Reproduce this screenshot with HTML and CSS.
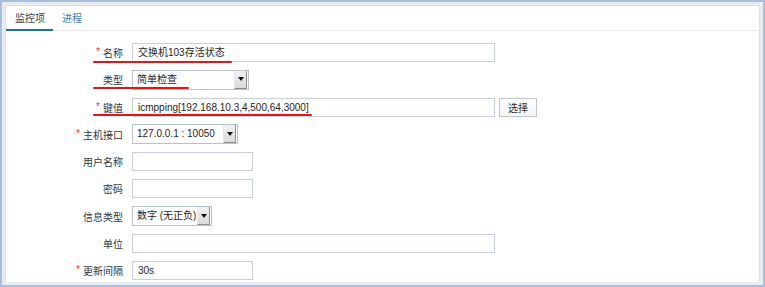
FILE: index.html
```html
<!DOCTYPE html>
<html lang="zh">
<head>
<meta charset="utf-8">
<link rel="stylesheet" href="styles.css">
</head>
<body>
<div class="frame">
  <div class="panel">
    <div class="tabs">
      <div class="tab active">监控项</div>
      <div class="tab link">进程</div>
    </div>
    <div class="form">
      <label class="lbl"><span class="req">*</span>名称</label>
      <div class="field"><div class="input w-wide">交换机103存活状态</div></div>

      <label class="lbl">类型</label>
      <div class="field"><div class="select w-type"><span class="sel-text">简单检查</span><span class="arrow"></span></div></div>

      <label class="lbl"><span class="req">*</span>键值</label>
      <div class="field"><div class="input w-wide">icmpping[192.168.10.3,4,500,64,3000]</div><div class="btn">选择</div></div>

      <label class="lbl"><span class="req">*</span>主机接口</label>
      <div class="field"><div class="select w-iface"><span class="sel-text">127.0.0.1 : 10050</span><span class="arrow"></span></div></div>

      <label class="lbl">用户名称</label>
      <div class="field"><div class="input w-short"></div></div>

      <label class="lbl">密码</label>
      <div class="field"><div class="input w-short"></div></div>

      <label class="lbl">信息类型</label>
      <div class="field"><div class="select w-info"><span class="sel-text">数字 (无正负)</span><span class="arrow"></span></div></div>

      <label class="lbl">单位</label>
      <div class="field"><div class="input w-wide"></div></div>

      <label class="lbl"><span class="req">*</span>更新间隔</label>
      <div class="field"><div class="input w-short">30s</div></div>
    </div>
  </div>
  <div class="mark mark-1"></div>
  <div class="mark mark-2"></div>
  <div class="mark mark-3"></div>
</div>
</body>
</html>
```

FILE: styles.css
```css
html, body {
  margin: 0;
  padding: 0;
  background: #ffffff;
}

body {
  font-family: "Liberation Sans", "Noto Sans CJK SC", sans-serif;
  font-size: 10px;
  color: #2b3036;
}

.frame {
  position: relative;
  width: 765px;
  height: 287px;
  box-sizing: border-box;
  border: 2px solid #a8bfdc;
  padding: 3px;
  background: #e8edf2;
  overflow: hidden;
}

.panel {
  height: 100%;
  box-sizing: border-box;
  border: 1px solid #dce1e6;
  border-bottom: none;
  background: #ffffff;
}

.tabs {
  display: flex;
  border-bottom: 1px solid #e6e9ec;
  height: 24px;
}

.tab {
  padding: 5px 8px 0 9px;
  line-height: 13px;
  height: 24px;
  box-sizing: border-box;
  color: #3a4148;
  font-family: "Noto Sans CJK SC", sans-serif;
}

.tab.active {
  border-bottom: 2px solid #1a6fb5;
  margin-bottom: -1px;
  height: 25px;
}

.tab.link {
  color: #2f7ec4;
}

.form {
  display: grid;
  grid-template-columns: 117px 1fr;
  column-gap: 9px;
  grid-auto-rows: 19px;
  row-gap: 8.25px;
  padding-top: 12px;
}

.lbl {
  display: flex;
  align-items: center;
  justify-content: flex-end;
  font-family: "Noto Sans CJK SC", sans-serif;
  color: #30363c;
  white-space: nowrap;
}

.req {
  color: #e53935;
  margin-right: 3px;
  font-family: "Liberation Sans", sans-serif;
  position: relative;
  top: -1px;
}

.field {
  display: flex;
  align-items: center;
  gap: 4px;
}

.input {
  height: 19px;
  box-sizing: border-box;
  border: 1px solid #c8d0d7;
  background: #ffffff;
  padding: 0 5px;
  line-height: 17px;
  color: #1e1e1e;
  white-space: nowrap;
  overflow: hidden;
}

.w-wide { width: 363px; }
.w-short { width: 121px; }

.select {
  height: 20px;
  box-sizing: border-box;
  border: 1px solid #b9c2ca;
  background: #ffffff;
  display: flex;
  align-items: stretch;
  color: #1e1e1e;
}

.w-type { width: 117px; }
.w-iface { width: 106px; }
.w-info { width: 80px; }

.sel-text {
  flex: 1;
  padding-left: 4px;
  line-height: 18px;
  white-space: nowrap;
  overflow: hidden;
}

.arrow {
  width: 11px;
  margin: 0 1px 0 0;
  background: linear-gradient(#f2f2f2, #d9d9d9);
  border-right: 1px solid #8d8d8d;
  border-bottom: 1px solid #8d8d8d;
  border-left: 1px solid #e8e8e8;
  display: flex;
  align-items: center;
  justify-content: center;
}

.arrow::after {
  content: "";
  width: 0;
  height: 0;
  border-left: 3px solid transparent;
  border-right: 3px solid transparent;
  border-top: 4px solid #111111;
}

.btn {
  height: 19px;
  width: 38px;
  box-sizing: border-box;
  border: 1px solid #c3c8cd;
  background: linear-gradient(#ffffff, #f3f4f5);
  font-family: "Noto Sans CJK SC", sans-serif;
  color: #2b3036;
  line-height: 17px;
  text-align: center;
}

.mark {
  position: absolute;
  height: 2px;
  background: #ee1111;
  border-radius: 1px;
}

.mark-1 { left: 91px; top: 59px; width: 139px; }
.mark-2 { left: 91px; top: 85px; width: 96px; }
.mark-3 { left: 91px; top: 112px; width: 219px; }
```
